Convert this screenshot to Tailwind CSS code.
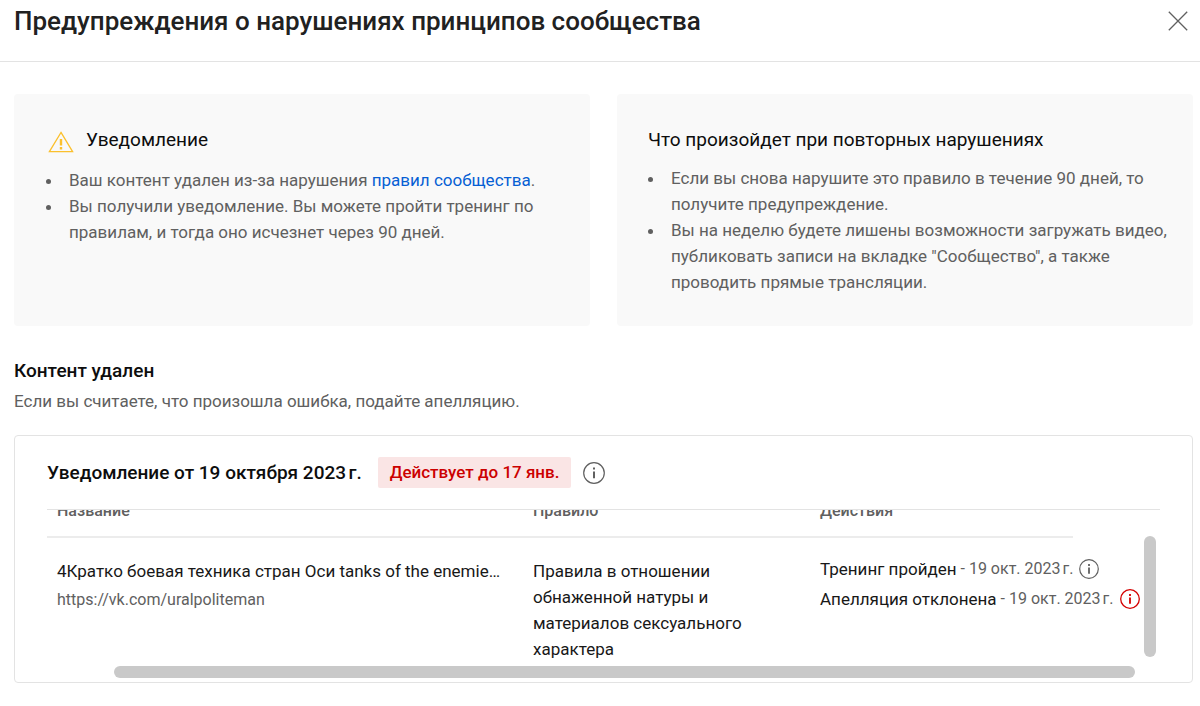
<!DOCTYPE html>
<html lang="ru">
<head>
<meta charset="utf-8">
<meta name="viewport" content="width=device-width, initial-scale=1">
<title>Предупреждения о нарушениях принципов сообщества</title>
<script src="https://cdn.jsdelivr.net/npm/@tailwindcss/browser@4"></script>
</head>
<body class="bg-white font-['Roboto',sans-serif] text-[17px] text-[#0d0d0d]">
<header class="flex h-[62px] items-start justify-between border-b border-[#e3e3e3] pl-[14px] pr-3 pt-1">
  <h1 class="text-[26px] leading-[34px] font-medium text-[#212121]">Предупреждения о нарушениях принципов сообщества</h1>
  <button type="button" aria-label="Закрыть" class="mt-[7px] text-[#606060]">
    <svg class="size-5" viewBox="0 0 20 20" fill="none" stroke="currentColor" stroke-width="1.3"><path d="M.8.8l18.4 18.4M19.2.8L.8 19.2"/></svg>
  </button>
</header>

<main class="pl-[14px] pr-[7px] pt-8">
  <div class="grid grid-cols-2 gap-[27px]">
    <section class="rounded bg-[#f9f9f9] pb-8 pl-[34px] pr-8 pt-8">
      <div class="flex items-center gap-3">
        <svg class="mt-1 h-[22px] w-[26px]" viewBox="0 0 26 22" fill="none"><path d="M13 1.4L24.6 20.6H1.4z" stroke="#fbc02d" stroke-width="1.3"/><path d="M13 8v6.6M13 16v2.4" stroke="#fbc02d" stroke-width="2.4"/></svg>
        <h2 class="text-[19px] leading-7">Уведомление</h2>
      </div>
      <ul class="mt-[13px] list-disc pl-[15px] leading-[26px] text-[#606060]">
        <li class="pl-1.5">Ваш контент удален из-за нарушения <a href="#" class="text-[#065fd4]">правил сообщества</a>.</li>
        <li class="pl-1.5">Вы получили уведомление. Вы можете пройти тренинг по правилам, и тогда оно исчезнет через 90 дней.</li>
      </ul>
    </section>
    <section class="rounded bg-[#f9f9f9] pb-[31px] pl-[31px] pr-5 pt-8">
      <h2 class="text-[19px] leading-7">Что произойдет при повторных нарушениях</h2>
      <ul class="mt-[11px] list-disc pl-[17px] leading-[26px] text-[#606060]">
        <li class="pl-1.5">Если вы снова нарушите это правило в течение 90 дней, то получите предупреждение.</li>
        <li class="pl-1.5">Вы на неделю будете лишены возможности загружать видео, публиковать записи на вкладке "Сообщество", а также проводить прямые трансляции.</li>
      </ul>
    </section>
  </div>

  <h2 class="mt-[31px] text-[19px] leading-7 font-medium">Контент удален</h2>
  <p class="mt-[3px] leading-[26px] text-[#606060]">Если вы считаете, что произошла ошибка, подайте апелляцию.</p>

  <section class="mt-[21px] rounded border border-[#e3e3e3] pb-1 pl-8 pr-8">
    <div class="flex h-[73px] items-center">
      <h3 class="text-[19px] leading-7 font-medium">Уведомление от 19 октября 2023&#8239;г.</h3>
      <span class="ml-4 rounded-xs bg-[#fae5e5] px-3 py-0.5 leading-[27px] font-medium text-[#cc0000]">Действует до 17 янв.</span>
      <button type="button" aria-label="Подробнее об уведомлении" class="ml-3 text-[#606060]">
        <svg class="size-[22px]" viewBox="0 0 22 22" fill="none" stroke="currentColor"><circle cx="11" cy="11" r="10.3" stroke-width="1.2"/><path d="M11 5.6v2M11 9.6v6.6" stroke-width="2"/></svg>
      </button>
    </div>
    <div class="flex h-[157px] items-end border-t border-[#e3e3e3]">
      <div class="h-full min-w-0 flex-1 overflow-hidden">
        <table class="-mt-[11px] w-[1026px] table-fixed border-collapse text-left">
          <colgroup><col class="w-[476px]"><col class="w-[287px]"><col class="w-[263px]"></colgroup>
          <thead>
            <tr class="border-b-2 border-[#ececec] text-base text-[#606060]">
              <th scope="col" class="px-2.5 pb-[13px] leading-6 font-medium">Название</th>
              <th scope="col" class="px-2.5 pb-[13px] leading-6 font-medium">Правило</th>
              <th scope="col" class="px-2.5 pb-[13px] leading-6 font-medium">Действия</th>
            </tr>
          </thead>
          <tbody class="align-top text-[#181818]">
            <tr>
              <td class="px-2.5 pt-5 leading-[26px]">
                <a href="#" class="block whitespace-nowrap">4Кратко боевая техника стран Оси tanks of the enemie…</a>
                <p class="mt-[3px] text-base leading-[26px] text-[#606060]">https://vk.com/uralpoliteman</p>
              </td>
              <td class="pl-2.5 pr-12 pt-5 leading-[26px]">Правила в отношении обнаженной натуры и материалов сексуального характера</td>
              <td class="px-2.5 pt-4 leading-[30px] whitespace-nowrap">
                <div class="flex items-center gap-1"><span>Тренинг пройден</span><span class="text-base leading-[30px] text-[#606060]">- 19 окт. 2023&#8239;г.</span>
                  <button type="button" aria-label="Подробнее о тренинге" class="ml-0.5 shrink-0 text-[#606060]"><svg class="size-5" viewBox="0 0 20 20" fill="none" stroke="currentColor"><circle cx="10" cy="10" r="9.3" stroke-width="1.2"/><path d="M10 5v2M10 8.6v6.2" stroke-width="1.8"/></svg></button>
                </div>
                <div class="flex items-center gap-1"><span>Апелляция отклонена</span><span class="text-base leading-[30px] text-[#606060]">- 19 окт. 2023&#8239;г.</span>
                  <button type="button" aria-label="Подробнее об апелляции" class="ml-0.5 shrink-0 text-[#d40000]"><svg class="size-5" viewBox="0 0 20 20" fill="none" stroke="currentColor"><circle cx="10" cy="10" r="9.3" stroke-width="1.3"/><path d="M10 5v2M10 8.6v6.2" stroke-width="1.8"/></svg></button>
                </div>
              </td>
            </tr>
          </tbody>
        </table>
      </div>
      <div class="mr-1 mb-[9px] h-[121px] w-3 rounded-full bg-[#c9c9c9]"></div>
    </div>
    <div class="ml-[67px] mr-[25px] h-3 rounded-full bg-[#c9c9c9]"></div>
  </section>
</main>
</body>
</html>
